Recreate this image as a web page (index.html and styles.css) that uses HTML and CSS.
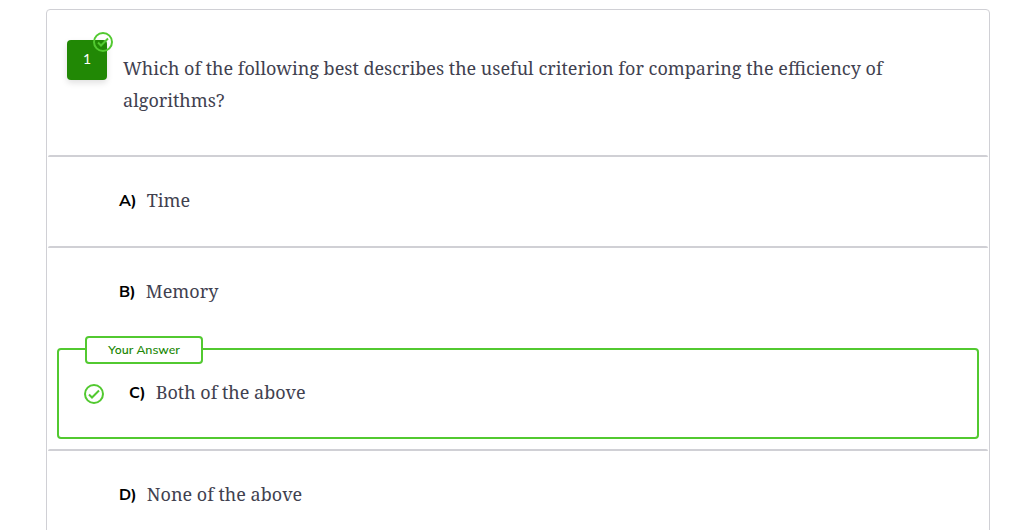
FILE: index.html
```html
<!DOCTYPE html>
<html lang="en">
<head>
<meta charset="utf-8">
<title>Quiz question</title>
<link rel="stylesheet" href="styles.css">
</head>
<body>
<main class="card">
  <header class="question">
    <div class="number">1
      <svg class="number-check" viewBox="0 0 20 20" aria-hidden="true"><circle cx="10" cy="10" r="9"/><path d="M5 10.5l3 3L15 6.5"/></svg>
    </div>
    <h1 class="question-text">Which of the following best describes the useful criterion for comparing the efficiency of algorithms?</h1>
  </header>
  <ol class="options">
    <li class="option"><b class="letter">A)</b><span>Time</span></li>
    <li class="option"><b class="letter">B)</b><span>Memory</span></li>
    <li class="option chosen">
      <span class="tag">Your Answer</span>
      <svg class="check" viewBox="0 0 20 20" aria-hidden="true"><circle cx="10" cy="10" r="9"/><path d="M5 10.5l3 3L15 6.5"/></svg>
      <b class="letter">C)</b><span>Both of the above</span>
    </li>
    <li class="option"><b class="letter">D)</b><span>None of the above</span></li>
  </ol>
</main>
</body>
</html>
```
FILE: styles.css
```css
* { box-sizing: border-box; }
body {
  margin: 0;
  padding: 9px 25px 0 46px;
  background: #fff;
  color: #41414f;
  font-family: "Noto Serif", "Droid Serif", "DejaVu Serif", serif;
  font-size: 18px;
  line-height: 32px;
}
.card {
  border: 1px solid #d0d0d5;
  border-radius: 4px;
}
.question {
  display: flex;
  gap: 16px;
  padding: 30px 80px 39px 20px;
}
.number {
  position: relative;
  flex: none;
  width: 40px;
  height: 40px;
  border-radius: 4px;
  background: #218805;
  box-shadow: 0 3px 6px #0000001f;
  color: #fff;
  font: 14px/38px Lato, sans-serif;
  text-align: center;
}
.number-check {
  position: absolute;
  top: -8px;
  right: -6px;
  width: 20px;
  height: 20px;
}
.number-check, .check {
  fill: none;
  stroke: #52c930;
  stroke-width: 2;
}
.question-text {
  margin: 0;
  padding-top: 12px;
  font-size: 18px;
  font-weight: 400;
}
.options {
  margin: 0;
  padding: 0;
  list-style: none;
}
.option {
  display: flex;
  align-items: center;
  gap: 10px;
  margin: 0 1px;
  padding: 27px 71px 30px;
  border-top: 2px solid #d0d0d5;
  border-radius: 2px;
}
.letter {
  color: #000;
  font: 700 16px/32px Mulish, Lato, sans-serif;
}
.chosen {
  position: relative;
  margin: 11px 10px 10px;
  padding: 26px 25px 29px;
  border: 2px solid #52c930;
  border-radius: 4px;
}
.check {
  width: 20px;
  height: 20px;
  margin: 4px 15px 0 0;
}
.tag {
  position: absolute;
  top: -14px;
  left: 26px;
  width: 118px;
  border: 2px solid #52c930;
  border-radius: 4px;
  background: #fff;
  color: #218805;
  font: 600 12px/24px Mulish, Lato, sans-serif;
  text-align: center;
}
```
